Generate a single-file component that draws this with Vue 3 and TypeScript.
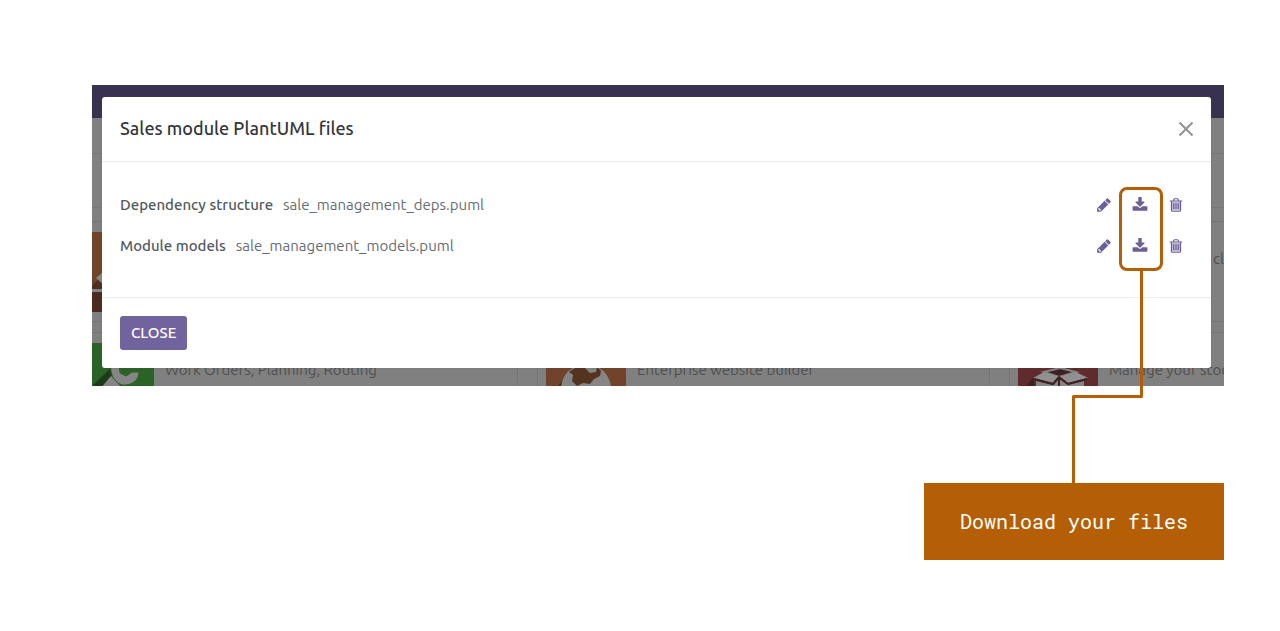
<script setup lang="ts">
interface ModuleFile {
  label: string
  filename: string
}

interface AppCard {
  id: string
  icon: string
  description: string
}

const files: ModuleFile[] = [
  { label: 'Dependency structure', filename: 'sale_management_deps.puml' },
  { label: 'Module models', filename: 'sale_management_models.puml' },
]

const cards: AppCard[] = [
  { id: 'sales', icon: 'sales', description: '' },
  { id: 'middle', icon: 'none', description: '' },
  { id: 'right', icon: 'none', description: 'cl' },
  { id: 'mrp', icon: 'mrp', description: 'Work Orders, Planning, Routing' },
  { id: 'website', icon: 'website', description: 'Enterprise website builder' },
  { id: 'stock', icon: 'stock', description: 'Manage your stoc' },
]
</script>

<template>
  <main class="page">
    <section class="stage">
      <div class="backdrop" aria-hidden="true">
        <div class="navbar"></div>
        <div class="toolbar"></div>
        <div class="toolbar"></div>
        <div class="cards">
          <div v-for="card in cards" :key="card.id" class="card">
            <svg v-if="card.icon === 'sales'" class="app-icon" viewBox="0 0 80 80">
              <rect width="80" height="80" fill="#6f452a" />
              <path d="M18 54 30 42v38H18z" fill="#4c2f20" />
              <path d="M22 46l8-7v14z" fill="#888" />
              <path d="M18 57h62v3H18z" fill="#858585" />
              <path d="M18 61h62v19H18z" fill="#4a2c1e" />
            </svg>
            <svg v-else-if="card.icon === 'mrp'" class="app-icon" viewBox="0 0 80 80">
              <rect width="80" height="80" fill="#2b6226" />
              <path d="M16 45 38 24v9L27 45z" fill="#1c3c18" />
              <path d="M27 45l10-12 11 12z" fill="#858585" />
              <path d="M37 20C35 35 44 43 52 42C60 41 65 36 65 29L58 29 52 33 46 30 45 20z" fill="#858585" stroke="#2b6226" />
            </svg>
            <svg v-else-if="card.icon === 'website'" class="app-icon" viewBox="0 0 80 80">
              <rect width="80" height="80" fill="#70432a" />
              <path d="M0 58 24 28v40H0z" fill="#4b2c1b" />
              <circle cx="40" cy="46" r="25" fill="#858585" />
              <path d="M23 29 29 25H39L44 30 50 29 51 24 55 28 54 33 48 36 44 41 37 40 31 43 26 38 27 32z" fill="#553321" />
            </svg>
            <svg v-else-if="card.icon === 'stock'" class="app-icon" viewBox="0 0 80 80">
              <rect width="80" height="80" fill="#602b2d" />
              <path d="M0 55 15 34l5 21z" fill="#3c2022" />
              <path d="M18 38 35 42 41 36 50 42 66 38V60H18z" fill="#858585" />
              <path d="M26 29 42 25 58 29 41 34z" fill="#3f2023" stroke="#858585" stroke-width="2" />
              <path d="M26 29 40 34 35 40 15 35z" fill="#909090" />
              <path d="M58 29 42 34 50 40 70 35z" fill="#909090" />
              <path d="M16 36 35 41 41 34 50 41 69 36M41 34v12" fill="none" stroke="#3f2023" stroke-width="2" />
            </svg>
            <span v-else class="app-icon"></span>
            <p :class="['description', { trailing: card.id === 'right' }]">{{ card.description }}</p>
          </div>
        </div>
      </div>

      <div class="dialog" role="dialog" aria-labelledby="dialog-title">
        <header class="dialog-header">
          <h1 id="dialog-title">Sales module PlantUML files</h1>
          <button class="dismiss" type="button" aria-label="Dismiss">
            <svg viewBox="0 0 16 16"><path d="M1.5 1.5l13 13M14.5 1.5l-13 13" /></svg>
          </button>
        </header>
        <ul class="files">
          <li v-for="file in files" :key="file.filename">
            <strong>{{ file.label }}</strong>
            <span class="filename">{{ file.filename }}</span>
            <div class="actions">
              <button type="button" :aria-label="`Edit ${file.filename}`">
                <svg viewBox="0 0 1792 1792"><path d="M491 1536l91-91-235-235-91 91v107h128v128h107zm523-928q0-22-22-22-10 0-17 7l-542 542q-7 7-7 17 0 22 22 22 10 0 17-7l542-542q7-7 7-17zm-54-192l416 416-832 832h-416v-416zm683 96q0 53-37 90l-166 166-416-416 166-165q36-38 90-38 53 0 91 38l235 234q37 39 37 91z" /><path d="M350 1180l600-640 200 230-620 620z" /></svg>
              </button>
              <button type="button" :aria-label="`Download ${file.filename}`">
                <svg viewBox="0 0 1792 1792"><path d="M1728 1120v320q0 40-28 68t-68 28h-1472q-40 0-68-28t-28-68v-320q0-40 28-68t68-28h465l135 136q58 56 136 56t136-56l136-136h464q40 0 68 28t28 68zm-325-569q17 41-14 70l-448 448q-18 19-45 19t-45-19l-448-448q-31-29-14-70 17-39 59-39h256v-448q0-26 19-45t45-19h256q26 0 45 19t19 45v448h256q42 0 59 39z" /></svg>
              </button>
              <button type="button" :aria-label="`Delete ${file.filename}`">
                <svg viewBox="0 0 1792 1792">
                  <path d="M448 512h896v1000h-896z" opacity=".45" />
                  <path d="M704 736v576q0 14-9 23t-23 9h-64q-14 0-23-9t-9-23v-576q0-14 9-23t23-9h64q14 0 23 9t9 23zm256 0v576q0 14-9 23t-23 9h-64q-14 0-23-9t-9-23v-576q0-14 9-23t23-9h64q14 0 23 9t9 23zm256 0v576q0 14-9 23t-23 9h-64q-14 0-23-9t-9-23v-576q0-14 9-23t23-9h64q14 0 23 9t9 23zm128 724v-948h-896v948q0 22 7 40.5t14.5 27 10.5 8.5h832q3 0 10.5-8.5t14.5-27 7-40.5zm-672-1076h448l-48-117q-7-9-17-11h-317q-10 2-17 11zm928 32v64q0 14-9 23t-23 9h-96v948q0 83-47 143.5t-113 60.5h-832q-66 0-113-58.5t-47-141.5v-952h-96q-14 0-23-9t-9-23v-64q0-14 9-23t23-9h309l70-167q15-37 54-63t79-26h320q40 0 79 26t54 63l70 167h309q14 0 23 9t9 23z" />
                </svg>
              </button>
            </div>
          </li>
        </ul>
        <footer class="dialog-footer">
          <button class="close" type="button">CLOSE</button>
        </footer>
      </div>

      <div class="highlight"></div>
      <svg class="connector" viewBox="0 0 71 213" aria-hidden="true">
        <path d="M69.500 0V126.500H1.500V213" />
      </svg>
    </section>
    <p class="callout">Download your files</p>
  </main>
</template>

<style>
body {
  margin: 0;
  background: #fff;
}
</style>

<style scoped>
.page {
  display: flex;
  flex-direction: column;
  padding: 85px 56px 71px 92px;
  font-family: Ubuntu, 'Noto Sans', 'Open Sans', sans-serif;
}

.stage {
  position: relative;
  display: grid;
  padding: 12px 13px 18px 10px;
}

.backdrop {
  position: absolute;
  inset: 0;
  overflow: hidden;
  background: #808080;
}

.navbar {
  height: 33px;
  background: #393150;
}

.toolbar {
  box-sizing: border-box;
  height: 36px;
  border-bottom: 1px solid #767676;
}

.toolbar + .toolbar {
  height: 54px;
}

.cards {
  display: grid;
  grid-template-columns: repeat(3, 453px);
  gap: 10px 19px;
  margin: 13px 0 0 -27px;
}

.card {
  display: flex;
  gap: 11px;
  box-sizing: border-box;
  height: 101px;
  padding: 10px 8px;
  border: 1px solid #757575;
}

.app-icon {
  flex: none;
  width: 80px;
  height: 80px;
}

.description {
  margin: 16px 0 0;
  color: #505050;
  font-size: 15px;
  line-height: 22px;
  white-space: nowrap;
}

.description.trailing {
  padding-left: 104px;
}

.dialog {
  position: relative;
  border-radius: 3px;
  background: #fff;
  box-shadow: 0 0 2px #5555;
}

.dialog-header {
  display: flex;
  align-items: center;
  justify-content: space-between;
  box-sizing: border-box;
  height: 65px;
  padding: 0 17px 0 18px;
  border-bottom: 1px solid #e9ebed;
}

h1 {
  margin: 0;
  padding-bottom: 2px;
  color: #33363b;
  font-size: 18px;
  font-weight: 500;
  line-height: 24px;
}

button {
  display: flex;
  align-items: center;
  justify-content: center;
  margin: 0;
  padding: 0;
  border: 0;
  background: none;
  font-family: inherit;
  cursor: pointer;
}

.dismiss svg {
  width: 16px;
  height: 16px;
  fill: none;
  stroke: #929292;
  stroke-width: 2;
}

.files {
  margin: 0;
  padding: 22px 17px 31px 18px;
  list-style: none;
}

.files li {
  display: flex;
  align-items: center;
  gap: 10px;
  height: 41px;
  color: #666c72;
  font-size: 15px;
  line-height: 22px;
}

.files strong {
  color: #525960;
  font-weight: 500;
}

.actions {
  display: flex;
  margin-left: auto;
}

.actions button {
  width: 36px;
  height: 24px;
}

.actions svg {
  width: 16px;
  height: 16px;
  fill: #6c5f98;
}

.dialog-footer {
  padding: 18px;
  border-top: 1px solid #e9ebed;
}

.close {
  height: 34px;
  padding: 0 11px 2px;
  border-radius: 3px;
  background: #71639e;
  color: #fff;
  font-size: 15px;
  font-weight: 500;
}

.highlight {
  position: absolute;
  top: 102px;
  right: 61px;
  box-sizing: border-box;
  width: 44px;
  height: 84px;
  border: 3px solid #b45f06;
  border-radius: 8px;
  pointer-events: none;
}

.connector {
  position: absolute;
  top: 185px;
  right: 81px;
  width: 71px;
  height: 213px;
  fill: none;
  stroke: #b45f06;
  stroke-width: 3;
  stroke-linejoin: round;
  pointer-events: none;
}

.callout {
  align-self: flex-end;
  margin: 97px 0 0;
  padding: 24px 36px 25px;
  background: #b45f06;
  color: #fff;
  font-family: 'Roboto Mono', 'DejaVu Sans Mono', monospace;
  font-size: 20px;
  line-height: 28px;
}
</style>
